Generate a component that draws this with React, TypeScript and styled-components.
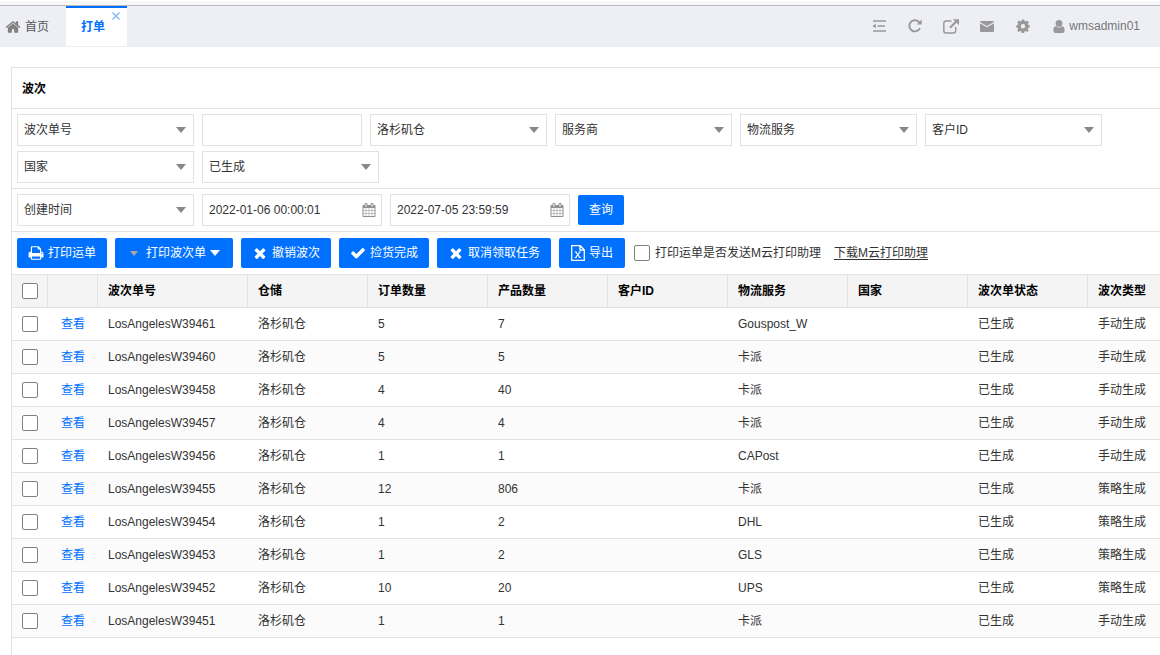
import React from "react";
import styled, { createGlobalStyle, css } from "styled-components";

const GlobalStyle = createGlobalStyle`
  *, *::before, *::after { box-sizing: border-box; }
  body {
    margin: 0;
    background: #fff;
    color: #333;
    font: 12px/18px "Liberation Sans", "Noto Sans CJK SC", sans-serif;
    overflow-x: hidden;
  }
  button, input, select { font: inherit; color: inherit; margin: 0; }
  a { color: inherit; text-decoration: none; }
`;

const PATHS = {
  home: "M1472 992v480q0 26-19 45t-45 19h-384v-384h-256v384h-384q-26 0-45-19t-19-45v-480q0-1 .5-3t.5-3l575-474 575 474q1 2 1 6zm223-69l-62 74q-8 9-21 11h-3q-13 0-21-7l-692-577-692 577q-12 8-24 7-13-2-21-11l-62-74q-8-10-7-23.5t11-21.5l719-599q32-26 76-26t76 26l244 204v-195q0-14 9-23t23-9h192q14 0 23 9t9 23v408l219 182q10 8 11 21.5t-7 23.5z",
  calendar: "M192 1664h288v-288h-288v288zm352 0h320v-288h-320v288zm-352-352h288v-320h-288v320zm352 0h320v-320h-320v320zm-352-384h288v-288h-288v288zm736 736h320v-288h-320v288zm-384-736h320v-288h-320v288zm768 736h288v-288h-288v288zm-384-352h320v-320h-320v320zm-352-864v-288q0-13-9.5-22.5t-22.5-9.5h-64q-13 0-22.5 9.5t-9.5 22.5v288q0 13 9.5 22.5t22.5 9.5h64q13 0 22.5-9.5t9.5-22.5zm736 864h288v-320h-288v320zm-384-384h320v-288h-320v288zm384 0h288v-288h-288v288zm32-480v-288q0-13-9.5-22.5t-22.5-9.5h-64q-13 0-22.5 9.5t-9.5 22.5v288q0 13 9.5 22.5t22.5 9.5h64q13 0 22.5-9.5t9.5-22.5zm384-64v1280q0 52-38 90t-90 38h-1408q-52 0-90-38t-38-90v-1280q0-52 38-90t90-38h128v-96q0-66 47-113t113-47h64q66 0 113 47t47 113v96h384v-96q0-66 47-113t113-47h64q66 0 113 47t47 113v96h128q52 0 90 38t38 90z",
  check: "M1671 566q0 40-28 68l-724 724-136 136q-28 28-68 28t-68-28l-136-136-362-362q-28-28-28-68t28-68l136-136q28-28 68-28t68 28l294 295 656-657q28-28 68-28t68 28l136 136q28 28 28 68z",
  times: "M1490 1322q0 40-28 68l-136 136q-28 28-68 28t-68-28l-294-294-294 294q-28 28-68 28t-68-28l-136-136q-28-28-28-68t28-68l294-294-294-294q-28-28-28-68t28-68l136-136q28-28 68-28t68 28l294 294 294-294q28-28 68-28t68 28l136 136q28 28 28 68t-28 68l-294 294 294 294q28 28 28 68z",
  print: "M448 1536h896v-256h-896v256zm0-640h896v-384h-160q-40 0-68-28t-28-68v-160h-640v640zm1152 64q0-26-19-45t-45-19-45 19-19 45 19 45 45 19 45-19 19-45zm128 0v416q0 13-9.5 22.5t-22.5 9.5h-224v160q0 40-28 68t-68 28h-960q-40 0-68-28t-28-68v-160h-224q-13 0-22.5-9.5t-9.5-22.5v-416q0-79 56.5-135.5t135.5-56.5h64v-544q0-40 28-68t68-28h672q40 0 88 20t76 48l152 152q28 28 48 76t20 88v256h64q79 0 135.5 56.5t56.5 135.5z",
};

const Glyph = ({ name, size }: { name: keyof typeof PATHS; size: number }) => (
  <svg width={size} height={size} viewBox="0 0 1792 1792" fill="currentColor" aria-hidden="true">
    <path d={PATHS[name]} />
  </svg>
);

const TopStrip = styled.div`
  height: 6px;
  background: #f7f7f7;
  border-top: 1px solid #fff;
  border-bottom: 1px solid #b9b9be;
`;

const Header = styled.header`
  display: flex;
  justify-content: space-between;
  height: 41px;
  padding: 0 20px 1px 0;
  background: #eeeff5;
`;

const Tabs = styled.nav`
  display: flex;
`;

const TabItem = styled.div<{ $active?: boolean }>`
  position: relative;
  display: flex;
  align-items: center;
  border-top: 2px solid transparent;
  padding: 0 17px 0 5px;
  color: #555;
  ${(p) =>
    p.$active &&
    css`
      padding: 0 22px 0 15px;
      background: #fff;
      border-top-color: #0071ff;
      color: #0071ff;
      font-weight: bold;
    `}
  a {
    display: flex;
    align-items: center;
    gap: 4px;
  }
  a svg { color: #808080; }
`;

const CloseTab = styled.button`
  position: absolute;
  top: 3px;
  right: 6px;
  width: 10px;
  height: 10px;
  padding: 0;
  border: 0;
  background: none;
  color: #80b4f8;
  svg { display: block; }
`;

const Tools = styled.div`
  display: flex;
  align-items: center;
  gap: 20px;
  color: #999;
`;

const ToolButton = styled.button`
  display: flex;
  align-items: center;
  justify-content: center;
  min-width: 16px;
  height: 20px;
  padding: 0;
  border: 0;
  background: none;
`;

const UserButton = styled(ToolButton)`
  gap: 4px;
  margin-left: 2px;
  span { color: #777; }
`;

const Panel = styled.main`
  margin: 20px 0 0 11px;
  min-height: calc(100vh - 67px);
  border: solid #e2e2e2;
  border-width: 1px 0 0 1px;
`;

const Title = styled.h1`
  margin: 0;
  padding: 12px 10px 10px;
  border-bottom: 1px solid #e2e2e2;
  color: #000;
  font-size: 12px;
  line-height: 18px;
`;

const FilterRow = styled.form`
  display: flex;
  flex-wrap: wrap;
  align-items: center;
  gap: 5px 8px;
  padding: 5px;
  border-bottom: 1px solid #e2e2e2;
`;

const SelectBox = styled.div`
  position: relative;
  width: 177px;
  svg {
    position: absolute;
    top: 13px;
    right: 8px;
    pointer-events: none;
  }
`;

const Select = styled.select`
  display: block;
  appearance: none;
  width: 100%;
  height: 32px;
  padding: 0 20px 0 6px;
  border: 1px solid #e2e2e2;
  border-radius: 0;
  background: #fff;
`;

const TextInput = styled.input<{ $width: number }>`
  display: block;
  width: ${(p) => p.$width}px;
  height: 32px;
  padding: 0 6px;
  border: 1px solid #e2e2e2;
  border-radius: 0;
  background: #fff;
`;

const DateBox = styled.div`
  position: relative;
  svg {
    position: absolute;
    top: 9px;
    right: 6px;
    color: #909090;
    pointer-events: none;
  }
`;

const Button = styled.button<{ $width: number }>`
  display: flex;
  align-items: center;
  justify-content: center;
  gap: 4px;
  min-width: ${(p) => p.$width}px;
  height: 30px;
  padding: 0;
  border: 0;
  border-radius: 2px;
  background: #0071ff;
  color: #fff;
  white-space: nowrap;
`;

const Toolbar = styled.div`
  display: flex;
  flex-wrap: wrap;
  align-items: center;
  gap: 8px;
  padding: 6px 5px;
`;

const CheckLabel = styled.label`
  display: flex;
  align-items: center;
  gap: 5px;
  margin: 0 5px 0 1px;
`;

const Check = styled.input.attrs({ type: "checkbox" })`
  display: block;
  flex: none;
  appearance: none;
  width: 16px;
  height: 16px;
  border: 1px solid #808080;
  border-radius: 2px;
  background: #fff;
  &:checked { background: #0071ff; }
`;

const DownloadLink = styled.a`
  text-decoration: underline;
  text-underline-offset: 2px;
`;

const Table = styled.table`
  width: 100%;
  table-layout: fixed;
  border-collapse: separate;
  border-spacing: 0;
  border-top: 1px solid #e2e2e2;
  th, td {
    height: 33px;
    padding: 0 0 0 10px;
    border-bottom: 1px solid #e2e2e2;
    text-align: left;
    white-space: nowrap;
  }
  th {
    background: #f4f4f4;
    border-right: 1px solid #e2e2e2;
    color: #000;
  }
  th:last-child { border-right: 0; }
  tbody tr:nth-child(even) { background: #fbfbfb; }
`;

const Col = styled.col<{ $width?: number }>`
  width: ${(p) => (p.$width ? `${p.$width}px` : "auto")};
`;

const ViewCell = styled.td`
  && {
    padding: 0;
    text-align: center;
  }
  a { color: #0071ff; }
`;

const Arrow = ({ color = "#888" }: { color?: string }) => (
  <svg width="10" height="6" viewBox="0 0 10 6" fill={color} aria-hidden="true">
    <path d="M0 0h10L5 6z" />
  </svg>
);

const Dropdown = ({ label }: { label: string }) => (
  <SelectBox>
    <Select aria-label={label}>
      <option>{label}</option>
    </Select>
    <Arrow />
  </SelectBox>
);

const DateField = ({ label, value }: { label: string; value: string }) => (
  <DateBox>
    <TextInput $width={180} aria-label={label} defaultValue={value} />
    <Glyph name="calendar" size={14} />
  </DateBox>
);

const COLUMNS = ["波次单号", "仓储", "订单数量", "产品数量", "客户ID", "物流服务", "国家", "波次单状态", "波次类型"];
const WIDTHS = [36, 50, 150, 120, 120, 120, 120, 120, 120, 120];

const ROWS: [string, number, number, string, string][] = [
  ["39461", 5, 7, "Gouspost_W", "手动生成"],
  ["39460", 5, 5, "卡派", "手动生成"],
  ["39458", 4, 40, "卡派", "手动生成"],
  ["39457", 4, 4, "卡派", "手动生成"],
  ["39456", 1, 1, "CAPost", "手动生成"],
  ["39455", 12, 806, "卡派", "策略生成"],
  ["39454", 1, 2, "DHL", "策略生成"],
  ["39453", 1, 2, "GLS", "策略生成"],
  ["39452", 10, 20, "UPS", "策略生成"],
  ["39451", 1, 1, "卡派", "手动生成"],
];

export default function App() {
  return (
    <>
      <GlobalStyle />
      <TopStrip />
      <Header>
        <Tabs>
          <TabItem>
            <a href="#home">
              <Glyph name="home" size={16} />
              首页
            </a>
          </TabItem>
          <TabItem $active>
            <a href="#print">打单</a>
            <CloseTab aria-label="关闭">
              <svg width="10" height="10" viewBox="0 0 10 10" stroke="currentColor" strokeWidth="1.3" fill="none">
                <path d="M1.500 1.500l7 7M8.500 1.500l-7 7" />
              </svg>
            </CloseTab>
          </TabItem>
        </Tabs>
        <Tools>
          <ToolButton aria-label="菜单">
            <svg width="14" height="12" viewBox="0 0 14 12" fill="none" stroke="currentColor">
              <path d="M1 1h13M5.500 6H13M1 11h13" strokeWidth="1.3" />
              <path d="M.5 6l3.300-2.200v4.400z" fill="currentColor" stroke="none" />
            </svg>
          </ToolButton>
          <ToolButton aria-label="刷新">
            <svg width="14" height="14" viewBox="0 0 14 14" fill="none" stroke="currentColor">
              <path d="M12 9.200A5.600 5.600 0 1 1 11.400 3.400" strokeWidth="1.9" />
              <path d="M13.700.600v5H8.600z" fill="currentColor" stroke="none" />
            </svg>
          </ToolButton>
          <ToolButton aria-label="新窗口">
            <svg width="16" height="15" viewBox="0 0 16 15" fill="none" stroke="currentColor">
              <path d="M8.500 2H3A2.200 2.200 0 0 0 .8 4.200v7.600A2.200 2.200 0 0 0 3 14h7.500a2.200 2.200 0 0 0 2.200-2.200V8" strokeWidth="1.5" />
              <path d="M7 8.800l6-6" strokeWidth="2.200" />
              <path d="M10 .2h6v6z" fill="currentColor" stroke="none" />
            </svg>
          </ToolButton>
          <ToolButton aria-label="消息">
            <svg width="14" height="11" viewBox="0 0 14 11" fill="currentColor">
              <path d="M1 0h12a1 1 0 0 1 1 1L7 5 0 1a1 1 0 0 1 1-1zM0 2.300l7 4 7-4V10a1 1 0 0 1-1 1H1a1 1 0 0 1-1-1z" />
            </svg>
          </ToolButton>
          <ToolButton aria-label="设置">
            <svg width="14" height="14" viewBox="0 0 14 14" fill="currentColor" fillRule="evenodd">
              <path d="M5.800.500h2.400l.4 1.600 1.200.500 1.500-.900 1.500 1.500-.900 1.500.500 1.200 1.300.300v2.200l-1.400.400-.500 1.200.900 1.400-1.600 1.600-1.400-.900-1.200.500-.300 1.400H5.800l-.4-1.400-1.200-.500-1.400.9-1.600-1.600.9-1.400-.500-1.200L.3 8.400V6.200l1.400-.4.500-1.200-.9-1.400 1.600-1.600 1.400.9 1.200-.5zM7 5a2.200 2.200 0 1 0 0 4.400A2.200 2.200 0 0 0 7 5z" />
            </svg>
          </ToolButton>
          <UserButton>
            <svg width="12" height="13" viewBox="0 0 12 13" fill="currentColor">
              <circle cx="6" cy="3.400" r="3.400" />
              <path d="M3 6.300a4.300 4.300 0 0 0 6 0c2 0 2.600 2 2.600 4.200 0 1.500-.8 2.500-2 2.500H2.400c-1.200 0-2-1-2-2.500C.4 8.300 1 6.300 3 6.300z" />
            </svg>
            <span>wmsadmin01</span>
          </UserButton>
        </Tools>
      </Header>
      <Panel>
        <Title>波次</Title>
        <FilterRow>
          <Dropdown label="波次单号" />
          <TextInput $width={160} aria-label="单号" />
          <Dropdown label="洛杉矶仓" />
          <Dropdown label="服务商" />
          <Dropdown label="物流服务" />
          <Dropdown label="客户ID" />
          <Dropdown label="国家" />
          <Dropdown label="已生成" />
        </FilterRow>
        <FilterRow>
          <Dropdown label="创建时间" />
          <DateField label="开始时间" value="2022-01-06 00:00:01" />
          <DateField label="结束时间" value="2022-07-05 23:59:59" />
          <Button type="button" $width={46}>查询</Button>
        </FilterRow>
        <Toolbar>
          <Button $width={90}><Glyph name="print" size={16} />打印运单</Button>
          <Button $width={118}>
            <svg width="14" height="5" viewBox="0 0 14 5" fill="#a8a8a8" aria-hidden="true">
              <path d="M2 0h8L6 5z" />
            </svg>
            打印波次单
            <Arrow color="#fff" />
          </Button>
          <Button $width={90}><Glyph name="times" size={16} />撤销波次</Button>
          <Button $width={90}><Glyph name="check" size={16} />捡货完成</Button>
          <Button $width={114}><Glyph name="times" size={16} />取消领取任务</Button>
          <Button $width={66}>
            <svg width="14" height="16" viewBox="0 0 14 16" fill="none" stroke="currentColor" aria-hidden="true">
              <path d="M.7.700h8.600l4 4v10.600H.7zM9 .7v4.300h4.300" strokeWidth="1.3" />
              <path d="M4.800 7l4 5.500M8.800 7l-4 5.500M3.800 7h2M7.800 7h2M3.800 12.500h2M7.800 12.500h2" strokeWidth="1.2" />
            </svg>
            导出
          </Button>
          <CheckLabel>
            <Check />
            打印运单是否发送M云打印助理
          </CheckLabel>
          <DownloadLink href="#download">下载M云打印助理</DownloadLink>
        </Toolbar>
        <Table>
          <colgroup>
            {WIDTHS.map((w, i) => <Col key={i} $width={w} />)}
            <Col />
          </colgroup>
          <thead>
            <tr>
              <th><Check aria-label="全选" /></th>
              <th />
              {COLUMNS.map((c) => <th key={c}>{c}</th>)}
            </tr>
          </thead>
          <tbody>
            {ROWS.map(([no, orders, products, service, type]) => (
              <tr key={no}>
                <td><Check aria-label={`选择 ${no}`} /></td>
                <ViewCell><a href={`#${no}`}>查看</a></ViewCell>
                <td>LosAngelesW{no}</td>
                <td>洛杉矶仓</td>
                <td>{orders}</td>
                <td>{products}</td>
                <td />
                <td>{service}</td>
                <td />
                <td>已生成</td>
                <td>{type}</td>
              </tr>
            ))}
          </tbody>
        </Table>
      </Panel>
    </>
  );
}
